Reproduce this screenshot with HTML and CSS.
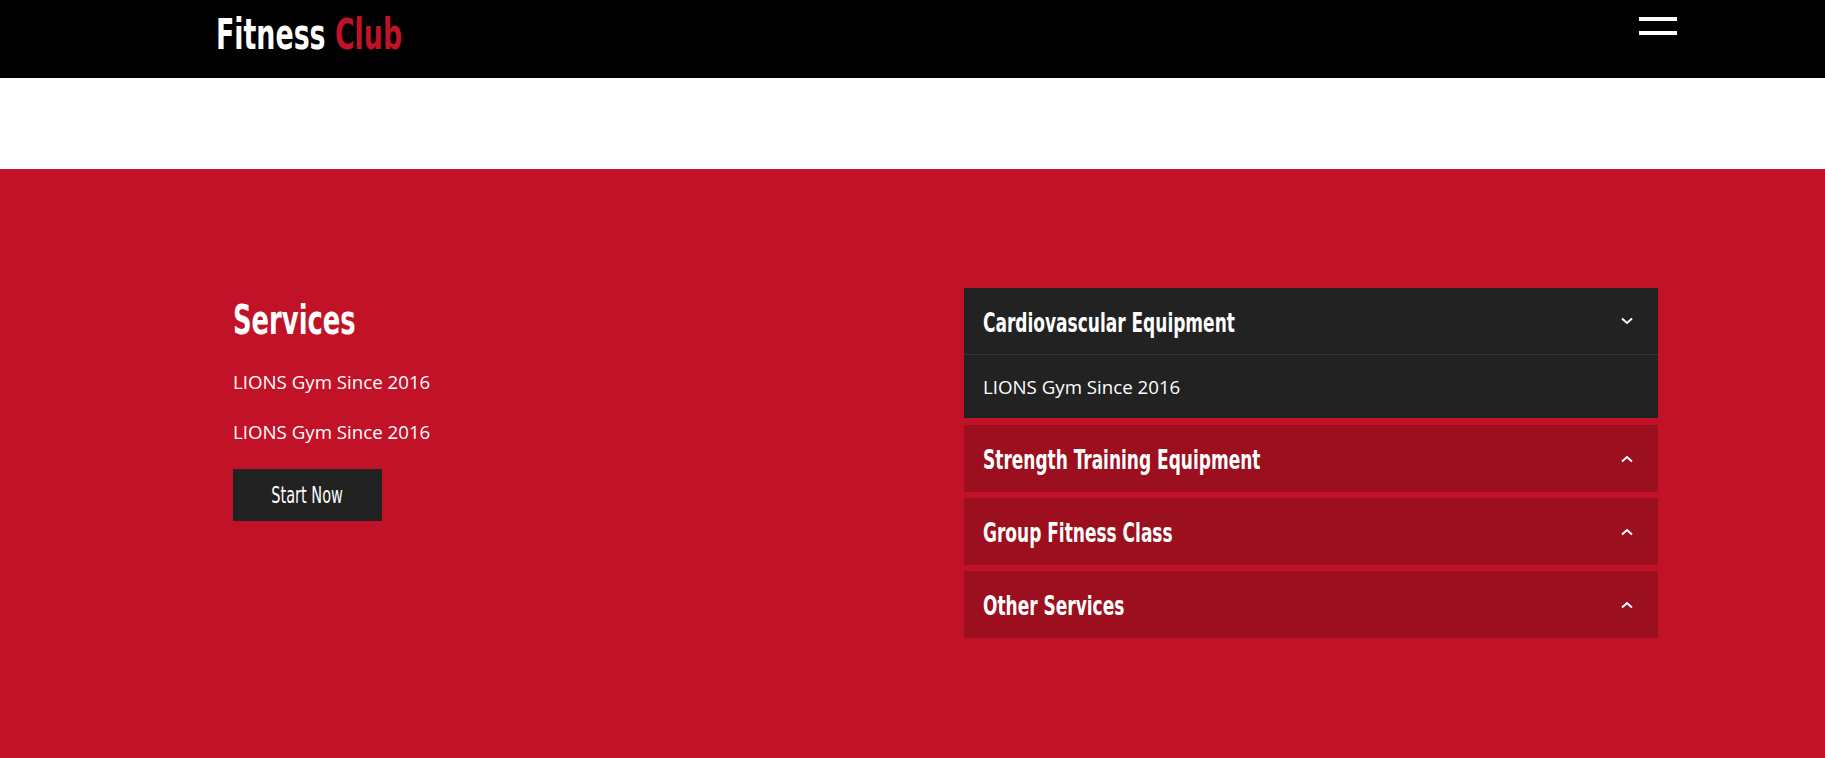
FILE: index.html
```html
<!DOCTYPE html>
<html lang="en">
<head>
<meta charset="utf-8">
<title>Fitness Club</title>
<link rel="stylesheet" href="styles.css">
</head>
<body>
<header class="topbar">
  <a class="logo" href="#"><span class="narrow">Fitness <span class="logo-accent">Club</span></span></a>
  <button class="burger" aria-label="Menu"><span></span><span></span></button>
</header>
<div class="spacer"></div>
<section class="services">
  <div class="intro">
    <h2 class="intro-title"><span class="narrow">Services</span></h2>
    <p class="intro-text">LIONS Gym Since 2016</p>
    <p class="intro-text">LIONS Gym Since 2016</p>
    <a class="btn" href="#"><span class="narrow">Start Now</span></a>
  </div>
  <div class="accordion">
    <div class="acc-item open">
      <div class="acc-head">
        <span class="acc-title narrow">Cardiovascular Equipment</span>
        <svg class="chev" width="12" height="8" viewBox="0 0 12 8"><polyline points="1,1.5 6,6 11,1.5" fill="none" stroke="#fff" stroke-width="2"/></svg>
      </div>
      <div class="acc-body">LIONS Gym Since 2016</div>
    </div>
    <div class="acc-item">
      <div class="acc-head">
        <span class="acc-title narrow">Strength Training Equipment</span>
        <svg class="chev" width="12" height="8" viewBox="0 0 12 8"><polyline points="1,6.5 6,2 11,6.5" fill="none" stroke="#fff" stroke-width="2"/></svg>
      </div>
    </div>
    <div class="acc-item">
      <div class="acc-head">
        <span class="acc-title narrow">Group Fitness Class</span>
        <svg class="chev" width="12" height="8" viewBox="0 0 12 8"><polyline points="1,6.5 6,2 11,6.5" fill="none" stroke="#fff" stroke-width="2"/></svg>
      </div>
    </div>
    <div class="acc-item">
      <div class="acc-head">
        <span class="acc-title narrow">Other Services</span>
        <svg class="chev" width="12" height="8" viewBox="0 0 12 8"><polyline points="1,6.5 6,2 11,6.5" fill="none" stroke="#fff" stroke-width="2"/></svg>
      </div>
    </div>
  </div>
</section>
</body>
</html>
```
FILE: styles.css
```css
* { box-sizing: border-box; }
html, body { margin: 0; padding: 0; }
body {
  font-family: "Open Sans", "Liberation Sans", sans-serif;
  background: #c21227;
  color: #fff;
  min-height: 758px;
}
.narrow {
  display: inline-block;
  font-family: "DejaVu Sans Condensed", "Liberation Sans", sans-serif;
  transform-origin: left center;
  white-space: nowrap;
}
.topbar {
  height: 78px;
  background: #000;
  display: flex;
  justify-content: space-between;
  align-items: flex-start;
  padding: 0 148px 0 216px;
}
.logo {
  font-weight: 700;
  font-size: 42px;
  line-height: 44px;
  margin-top: 11px;
  color: #fff;
  text-decoration: none;
}
.logo .narrow { transform: scaleX(0.71); }
.logo-accent { color: #c21227; }
.burger {
  margin-top: 17px;
  background: none;
  border: 0;
  padding: 0;
  display: flex;
  flex-direction: column;
  gap: 10px;
}
.burger span {
  display: block;
  width: 38px;
  height: 4px;
  background: #fff;
}
.spacer { height: 91px; background: #fff; }
.services {
  display: flex;
  padding: 119px 167px 100px 233px;
}
.intro { flex: 1; }
.intro-title {
  font-weight: 700;
  font-size: 41px;
  line-height: 44px;
  margin: 8px 0 0;
}
.intro-title .narrow { transform: scaleX(0.7); }
.intro-text {
  font-size: 18.7px;
  line-height: 26px;
  margin: 27px 0 0;
}
.intro-text + .intro-text { margin-top: 24px; }
.btn {
  display: flex;
  align-items: center;
  justify-content: center;
  width: 149px;
  height: 52px;
  margin-top: 24px;
  background: #222;
  color: #fff;
  text-decoration: none;
  font-size: 23px;
}
.btn .narrow { transform: scaleX(0.7); transform-origin: center center; }
.accordion {
  width: 694px;
  display: flex;
  flex-direction: column;
  gap: 6px;
}
.acc-item { background: #9b0f1e; }
.acc-item.open { background: #222; margin-bottom: 1px; }
.acc-head {
  height: 67px;
  display: flex;
  align-items: center;
  justify-content: space-between;
  padding: 0 25px 0 19px;
}
.acc-item.open .acc-head { border-bottom: 1px solid #353535; }
.acc-title {
  font-weight: 700;
  font-size: 27px;
  line-height: 32px;
  margin-top: 3px;
  transform: scaleX(0.7);
}
.chev { display: block; }
.acc-body {
  height: 63px;
  display: flex;
  align-items: center;
  padding: 0 19px;
  font-size: 18.7px;
}
```
